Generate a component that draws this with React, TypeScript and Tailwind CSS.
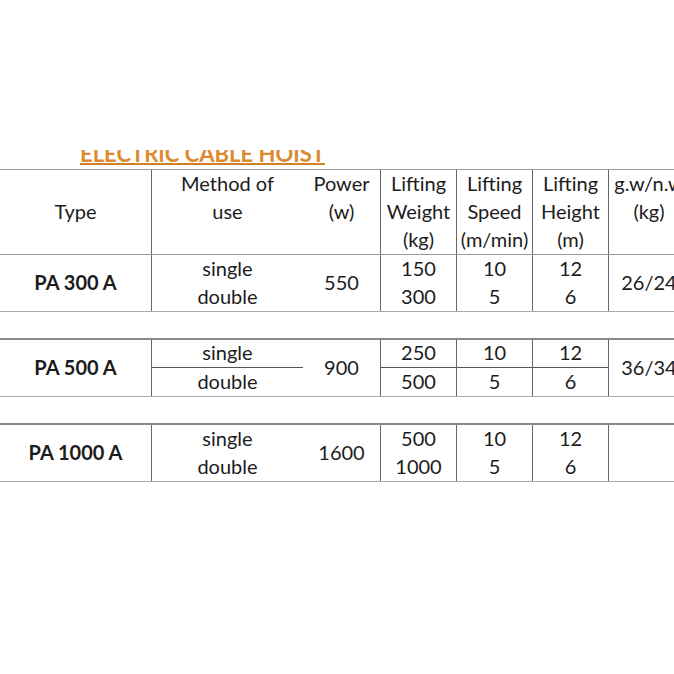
import React from "react";

const font = { fontFamily: "Lato, 'Open Sans', sans-serif" };

const Line = ({ children, className = "" }: { children?: React.ReactNode; className?: string }) => (
  <div className={`h-[28px] pb-[3px] flex items-center justify-center leading-none whitespace-nowrap ${className}`}>{children}</div>
);

const Split = ({ top, bottom, divided }: { top: string; bottom: string; divided?: boolean }) => (
  <>
    <Line className={divided ? "border-b border-[#555]" : ""}>{top}</Line>
    <Line>{bottom}</Line>
  </>
);

const rows = [
  { type: "PA 300 A", power: "550", weight: ["150", "300"], gw: "26/24", divided: false },
  { type: "PA 500 A", power: "900", weight: ["250", "500"], gw: "36/34", divided: true },
  { type: "PA 1000 A", power: "1600", weight: ["500", "1000"], gw: "", divided: false },
];

const c0 = "w-[152px] shrink-0 border-r border-[#666] flex flex-col justify-center";
const c1 = "w-[151px] shrink-0 flex flex-col";
const c2 = "w-[78px] shrink-0 border-r border-[#666] flex flex-col";
const cN = "w-[76px] shrink-0 border-r border-[#666] flex flex-col";
const cL = "w-[80px] shrink-0 flex flex-col";

export default function App() {
  return (
    <div className="w-[674px] h-[674px] bg-white overflow-hidden text-[20px] text-[#1c1c1c]" style={font}>
      <div className="h-[150px]" />
      <div className="h-[19px] overflow-hidden pl-[80px]">
        <div className="-mt-[7px] text-[22px] leading-none font-bold text-[#dc8a2e] underline decoration-2 underline-offset-1 decoration-[#d08028] whitespace-nowrap">
          ELECTRIC CABLE HOIST
        </div>
      </div>

      <div className="w-[700px]">
        <div className="flex h-[86px] border-t border-b border-[#999]">
          <div className={c0}>
            <Line>Type</Line>
          </div>
          <div className={c1}>
            <Line>Method of</Line>
            <Line>use</Line>
          </div>
          <div className={c2}>
            <Line>Power</Line>
            <Line>(w)</Line>
          </div>
          <div className={cN}>
            <Line>Lifting</Line>
            <Line>Weight</Line>
            <Line>(kg)</Line>
          </div>
          <div className={cN}>
            <Line>Lifting</Line>
            <Line>Speed</Line>
            <Line>(m/min)</Line>
          </div>
          <div className={cN}>
            <Line>Lifting</Line>
            <Line>Height</Line>
            <Line>(m)</Line>
          </div>
          <div className={cL}>
            <Line>g.w/n.w</Line>
            <Line>(kg)</Line>
          </div>
        </div>

        {rows.map((r, i) => (
          <div key={r.type}>
            {i > 0 && <div className="h-[26px]" />}
            <div className={`flex border-b border-[#aaa] ${i > 0 ? "border-t-2 border-t-[#8a8a8a] h-[59px]" : "h-[57px]"}`}>
              <div className={c0}>
                <Line className="font-bold">{r.type}</Line>
              </div>
              <div className={c1}>
                <Split top="single" bottom="double" divided={r.divided} />
              </div>
              <div className={`${c2} justify-center`}>
                <Line>{r.power}</Line>
              </div>
              <div className={cN}>
                <Split top={r.weight[0]} bottom={r.weight[1]} divided={r.divided} />
              </div>
              <div className={cN}>
                <Split top="10" bottom="5" divided={r.divided} />
              </div>
              <div className={cN}>
                <Split top="12" bottom="6" divided={r.divided} />
              </div>
              <div className={`${cL} justify-center`}>
                <Line>{r.gw}</Line>
              </div>
            </div>
          </div>
        ))}
      </div>
    </div>
  );
}
